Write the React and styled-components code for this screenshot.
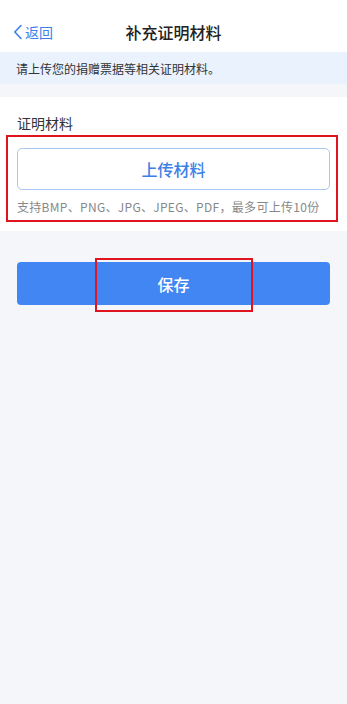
import React from 'react'
import styled, { createGlobalStyle } from 'styled-components'

const GlobalStyle = createGlobalStyle`
  html, body {
    margin: 0;
    padding: 0;
    background: #f5f6fa;
    font-family: "Noto Sans CJK SC", "Noto Sans", sans-serif;
  }
`

const Page = styled.div`
  position: relative;
  width: 347px;
  min-height: 704px;
  background: #f5f6fa;
`

const NavBar = styled.div`
  position: relative;
  height: 52px;
  background: #fff;
  display: flex;
  align-items: center;
  justify-content: center;
  padding-top: 12px;
  box-sizing: border-box;
`

const Back = styled.div`
  position: absolute;
  left: 13px;
  top: 12px;
  bottom: 0;
  display: flex;
  align-items: center;
  gap: 2px;
  color: #3d7fe8;
  font-size: 14px;
`

const Title = styled.div`
  font-size: 16px;
  color: #222;
  font-weight: 500;
`

const Notice = styled.div`
  height: 32px;
  background: #e9f2fd;
  display: flex;
  align-items: center;
  padding-left: 16px;
  font-size: 12px;
  color: #333;
`

const Card = styled.div`
  margin-top: 13px;
  background: #fff;
  padding: 16px 17px 16px 17px;
  display: flex;
  flex-direction: column;
`

const Label = styled.div`
  font-size: 14px;
  color: #333;
  line-height: 20px;
  margin-bottom: 15px;
`

const UploadButton = styled.div`
  height: 40px;
  border: 1px solid #a9c7f0;
  border-radius: 5px;
  display: flex;
  align-items: center;
  justify-content: center;
  color: #3d7fe8;
  font-size: 16px;
  font-weight: 500;
`

const Hint = styled.div`
  margin-top: 9px;
  font-size: 12px;
  line-height: 16px;
  letter-spacing: 0.3px;
  color: #888;
`

const Footer = styled.div`
  padding: 31px 17px 0;
`

const SaveButton = styled.div`
  height: 43px;
  border-radius: 4px;
  background: #4286f4;
  color: #fff;
  font-size: 16px;
  font-weight: 500;
  display: flex;
  align-items: center;
  justify-content: center;
`

const Mark = styled.div`
  position: absolute;
  left: ${p => p.$x}px;
  top: ${p => p.$y}px;
  width: ${p => p.$w}px;
  height: ${p => p.$h}px;
  border: 2px solid #e0141e;
  box-sizing: border-box;
  pointer-events: none;
`

const Chevron = () => (
  <svg width="10" height="16" viewBox="0 0 10 16" fill="none">
    <path d="M8 1.5 L1.8 8 L8 14.5" stroke="#3d7fe8" strokeWidth="1.6" strokeLinecap="round" strokeLinejoin="round" />
  </svg>
)

const App = () => (
  <Page>
    <GlobalStyle />
    <NavBar>
      <Back><Chevron />返回</Back>
      <Title>补充证明材料</Title>
    </NavBar>
    <Notice>请上传您的捐赠票据等相关证明材料。</Notice>
    <Card>
      <Label>证明材料</Label>
      <UploadButton>上传材料</UploadButton>
      <Hint>支持BMP、PNG、JPG、JPEG、PDF，最多可上传10份</Hint>
    </Card>
    <Footer>
      <SaveButton>保存</SaveButton>
    </Footer>
    <Mark $x={6} $y={135} $w={332} $h={87} />
    <Mark $x={95} $y={258} $w={158} $h={54} />
  </Page>
)

export default App
